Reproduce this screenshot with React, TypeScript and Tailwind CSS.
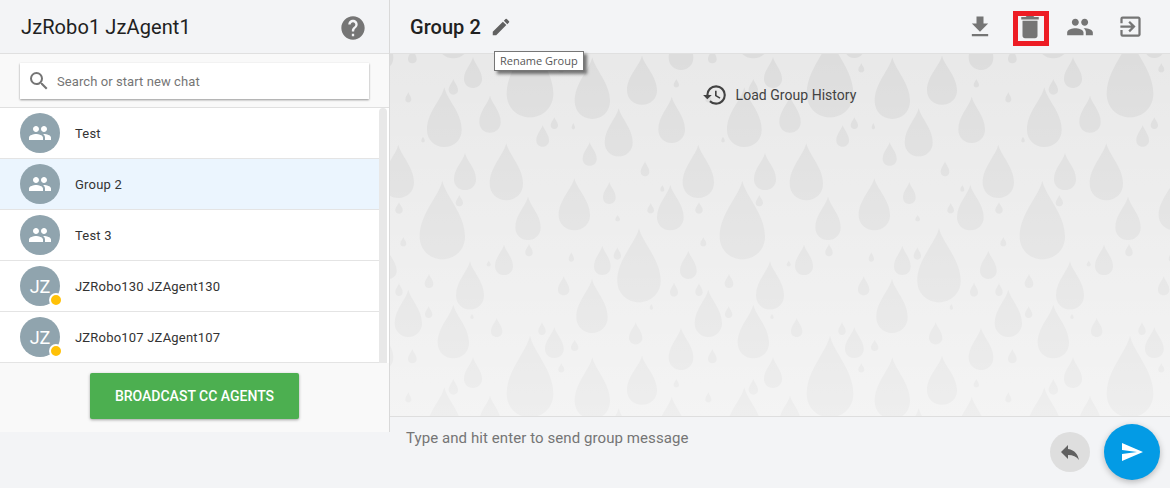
import React from "react";
import { MdHelp, MdSearch, MdPeople, MdEdit, MdFileDownload, MdDelete, MdExitToApp, MdHistory, MdReply, MdSend } from "react-icons/md";

const raw: number[][] = [
  [420,-55,190,70],[607,10,195,53],[756,5,152,45],[873,-78,48,37],[249,10,102,27],[67,-15,28,13],[190,75,122,14],[55,115,145,9],
  [163,100,279,52],[300,125,236,32],[458,213,278,19],[493,190,225,11],[550,207,226,5],[99,248,265,5],[686,163,307,42],[845,128,267,40],
  [859,75,100,8],[599,265,335,21],[765,322,367,13],[25,272,432,47],[225,298,408,33],[349,268,439,50],[553,373,529,47],[658,384,450,19],
  [817,393,413,6],[841,393,529,40],[782,448,478,10],[27,445,479,11],[157,380,616,68],[208,423,457,11],[414,428,558,38],[683,483,502,7],
  [40,550,577,9],[342,572,663,27],[417,570,607,11],[544,595,623,8],[296,620,637,6],[637,575,663,25],[682,580,617,11],[747,522,745,65],
  [895,590,675,25],[117,660,702,13],[240,622,766,42],[27,688,726,11],[55,707,849,41],[116,757,792,11],[190,752,913,47],[246,780,795,5],
  [320,792,849,17],[521,667,724,17],[606,675,837,47],[852,686,728,12],[784,750,767,5],[737,805,871,20],[456,805,843,11],[493,820,912,28],
  [554,857,891,11],[514,28,55,9],
];

function dropPath([cx, tip, bottom, hw]: number[]) {
  const x = cx / 3, t = tip / 3, h = (bottom - tip) / 3, w = hw / 3;
  const Y = (v: number) => (t + v * h).toFixed(1);
  const f = (v: number) => v.toFixed(1);
  return `M${f(x)} ${Y(0)}C${f(x + w * 0.15)} ${Y(0.2)} ${f(x + w)} ${Y(0.42)} ${f(x + w)} ${Y(0.71)}C${f(x + w)} ${Y(0.88)} ${f(x + w * 0.55)} ${Y(1)} ${f(x)} ${Y(1)}C${f(x - w * 0.55)} ${Y(1)} ${f(x - w)} ${Y(0.88)} ${f(x - w)} ${Y(0.71)}C${f(x - w)} ${Y(0.42)} ${f(x - w * 0.15)} ${Y(0.2)} ${f(x)} ${Y(0)}Z`;
}

function Rain() {
  const d = raw.map(dropPath).join("");
  return (
    <svg className="absolute inset-0 h-full w-full" aria-hidden="true">
      <defs>
        <pattern id="rain" width="300" height="300" patternUnits="userSpaceOnUse">
          {[-300, 0, 300].map((ox) =>
            [-300, 0, 300].map((oy) => <path key={`${ox}_${oy}`} d={d} transform={`translate(${ox} ${oy})`} fill="#000" fillOpacity="0.05" />)
          )}
        </pattern>
      </defs>
      <rect width="100%" height="100%" fill="url(#rain)" />
    </svg>
  );
}

const Row = ({ name, group, active }: { name: string; group?: boolean; active?: boolean }) => (
  <div className={`flex h-[51px] items-center border-b border-[#e4e4e4] pl-5 ${active ? "bg-[#ebf5fe]" : "bg-white"}`}>
    <div className="relative flex h-10 w-10 shrink-0 items-center justify-center rounded-full bg-[#90a4ae] text-[18px] text-white">
      {group ? <MdPeople size={24} /> : "JZ"}
      {!group && <span className="absolute left-[29px] top-[27px] h-[14px] w-[14px] rounded-full border-2 border-white bg-[#ffc107]" />}
    </div>
    <span className="ml-[15px] pt-[2px] text-[13px] tracking-[0.2px] text-[#333]">{name}</span>
  </div>
);

export default function App() {
  return (
    <div className="flex h-[488px] w-[1170px] overflow-hidden bg-[#f3f4f6] font-['Roboto',sans-serif]">
      <div className="flex h-[432px] w-[390px] shrink-0 flex-col border-r border-[#d9d9d9]">
        <div className="flex h-[54px] shrink-0 items-center justify-between border-b border-[#e0e0e0] pl-[21px] pr-[22px]">
          <span className="text-[20px] tracking-[0.1px] text-[#212121]">JzRobo1 JzAgent1</span>
          <MdHelp size={28} className="mt-[2px] text-[#757575]" />
        </div>
        <div className="flex h-[54px] shrink-0 items-center border-b border-[#e0e0e0] bg-[#f9f9f9] pl-5 pr-5">
          <div className="flex h-9 w-full items-center bg-white pl-[7px] shadow-[0_1px_2px_rgba(0,0,0,0.4)]">
            <MdSearch size={24} className="text-[#757575]" />
            <span className="ml-[6px] pt-[2px] text-[13px] tracking-[0.08px] text-[#757575]">Search or start new chat</span>
          </div>
        </div>
        <div className="relative shrink-0 bg-white pr-[2px]">
          <Row name="Test" group />
          <Row name="Group 2" group active />
          <Row name="Test 3" group />
          <Row name="JZRobo130 JZAgent130" />
          <Row name="JZRobo107 JZAgent107" />
          <div className="absolute bottom-0 right-[2px] top-0 w-2 rounded-t-[4px] bg-[#e8e8e8]" />
        </div>
        <div className="flex flex-1 items-start justify-center bg-[#f9f9f9] pr-[1px] pt-[10px]">
          <button className="h-[46px] w-[209px] rounded-[2px] bg-[#4caf50] pl-[1px] text-[14px] font-medium text-white shadow-[0_1px_3px_rgba(0,0,0,0.35)]">BROADCAST CC AGENTS</button>
        </div>
      </div>

      <div className="flex h-full flex-1 flex-col">
        <div className="relative flex h-[54px] shrink-0 items-center border-b border-[#e0e0e0] pl-5 pr-[15px]">
          <span className="text-[20px] font-medium tracking-[0.05px] text-[#212121]">Group 2</span>
          <MdEdit size={22} className="ml-[9px] text-[#616161]" />
          <div className="ml-auto flex items-center">
            <div className="flex w-[50px] justify-center"><MdFileDownload size={28} className="text-[#757575]" /></div>
            <div className="relative flex w-[50px] justify-center">
              <MdDelete size={30} className="text-[#757575]" />
              <span className="absolute -top-[1px] left-[8px] h-[35px] w-9 border-[5px] border-[#ed1c24]" />
            </div>
            <div className="flex w-[50px] justify-center"><MdPeople size={28} className="text-[#757575]" /></div>
            <div className="flex w-[50px] justify-center"><MdExitToApp size={27} className="text-[#757575]" /></div>
          </div>
          <div className="absolute left-[104px] top-[51px] z-10 border border-[#767676] bg-white px-[5px] py-[1px] font-['Open_Sans',sans-serif] text-[11px] leading-[16px] text-[#575757] shadow-[3px_3px_3px_rgba(0,0,0,0.5)]">Rename Group</div>
        </div>
        <div className="relative flex-1 overflow-hidden bg-[#e9e9e9]">
          <Rain />
          <div className="absolute inset-0 bg-linear-to-b from-white/0 to-white/50" />
          <div className="relative flex justify-center pt-[28px]">
            <div className="flex items-center">
              <MdHistory size={26} className="-ml-[2px] text-[#424242]" />
              <span className="ml-[8px] text-[14px] tracking-[0.03px] text-[#424242]">Load Group History</span>
            </div>
          </div>
        </div>
        <div className="flex h-[72px] shrink-0 items-start justify-between border-t border-[#dedede] pl-4 pr-[10px]">
          <span className="mt-[10px] text-[15px] tracking-[0.08px] text-[#757575]">Type and hit enter to send group message</span>
          <div className="mt-[7px] flex items-center">
            <div className="flex h-10 w-10 items-center justify-center rounded-full bg-[#dedede]"><MdReply size={24} className="text-[#616161]" /></div>
            <div className="ml-[14px] flex h-14 w-14 items-center justify-center rounded-full bg-[#039be5] shadow-[0_2px_6px_rgba(0,0,0,0.25)]"><MdSend size={24} className="text-white" /></div>
          </div>
        </div>
      </div>
    </div>
  );
}
